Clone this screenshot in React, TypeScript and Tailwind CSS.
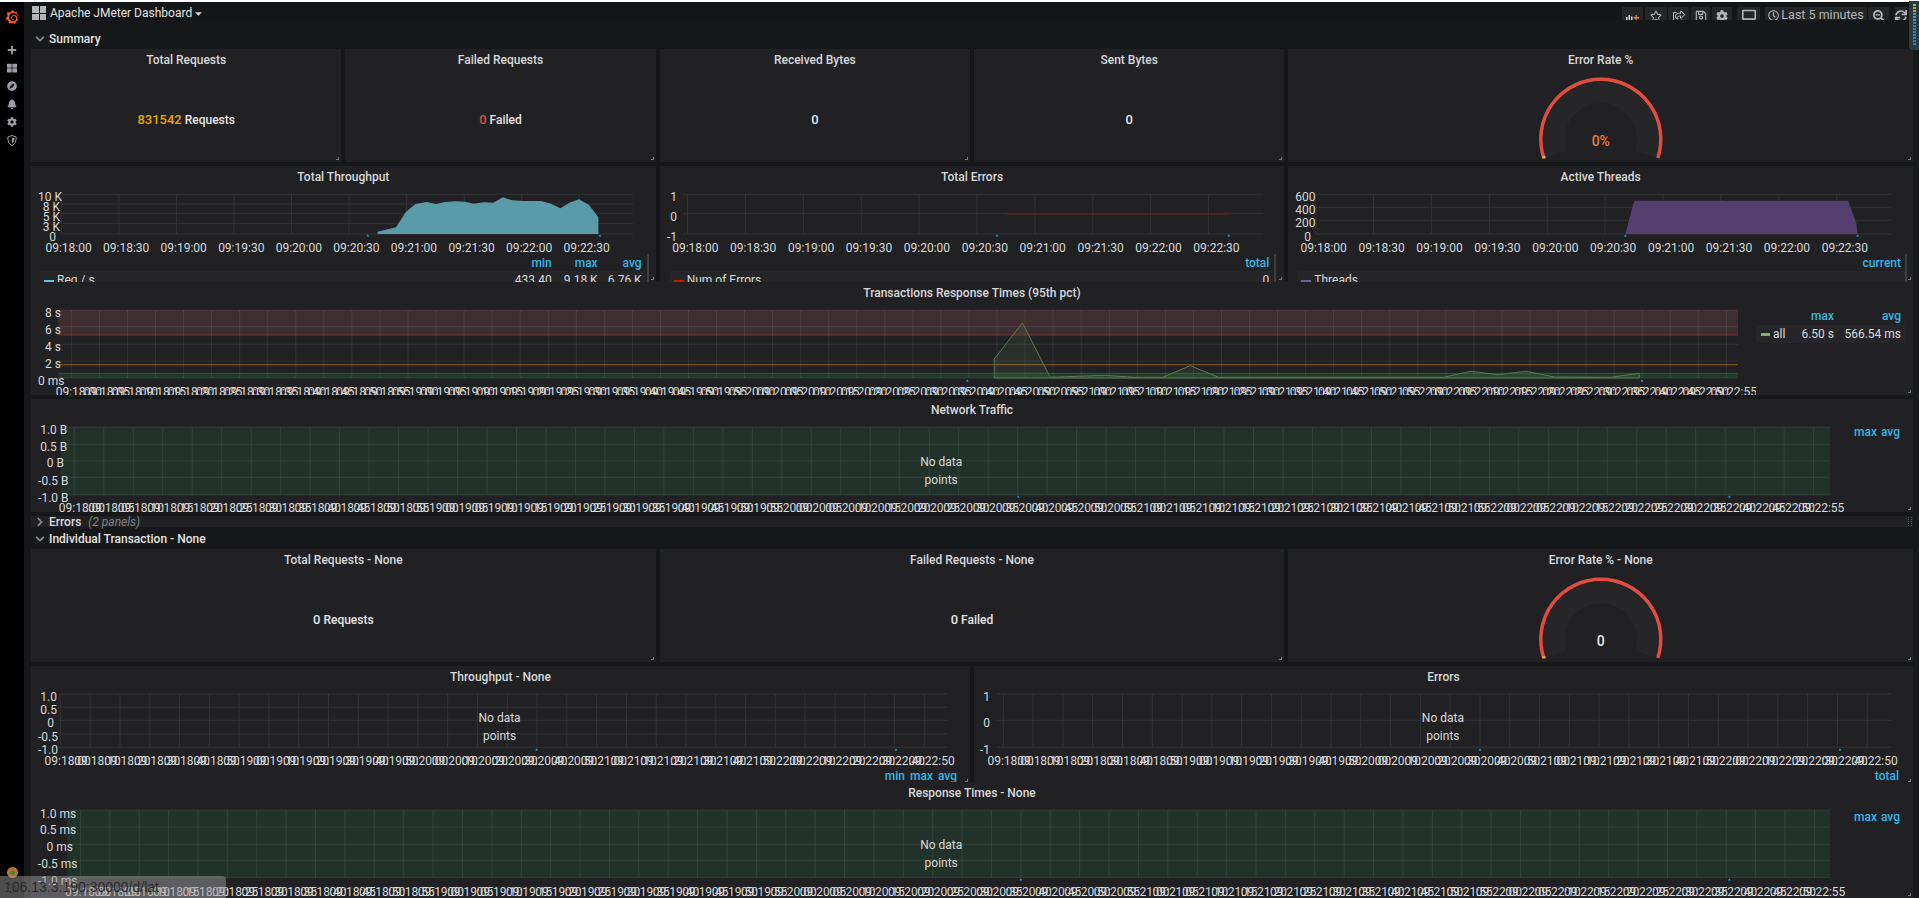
import type { ReactNode } from 'react'
import {
  FaPlus, FaThLarge, FaCompass, FaBell, FaCog, FaRegStar, FaRegShareSquare,
  FaRegSave, FaDesktop, FaRegClock, FaSearchMinus, FaSync, FaCaretDown, FaChevronDown, FaChevronRight,
} from 'react-icons/fa'
import { SiGrafana } from 'react-icons/si'

// hh:mm:ss of the k-th tick, the axis starts at 09:18:00
const tickTime = (k: number, step: number) => {
  const s = 9 * 3600 + 18 * 60 + k * step
  const pad = (v: number) => String(v).padStart(2, '0')
  return `${pad(Math.floor(s / 3600))}:${pad(Math.floor(s / 60) % 60)}:${pad(s % 60)}`
}

type Tick = [string, number, number]

interface ChartProps {
  box: [number, number, number, number] // page coords, so the numbers below read as page pixels
  left: number
  right: number
  lines: number[]
  x0: number
  dx: number
  n: number
  off: number
  step: number
  labelY: number
  ticks: Tick[]
  lineColor?: string
  tris?: [number, number][]
  under?: ReactNode
  children?: ReactNode
}

function Chart({ box, left, right, lines, x0, dx, n, off, step, labelY, ticks, lineColor = '#323336', tris = [], under, children }: ChartProps) {
  const [x, y, w, h] = box
  const idx = Array.from({ length: n }, (_, k) => k)
  return (
    <svg width={w} height={h} viewBox={`${x} ${y} ${w} ${h}`} className="block shrink-0">
      {under}
      {lines.map((ly) => <line key={ly} x1={left} x2={right} y1={ly} y2={ly} stroke={lineColor} />)}
      {idx.map((k) => (
        <line key={k} x1={x0 + k * dx} x2={x0 + k * dx} y1={lines[0]} y2={lines[lines.length - 1]} stroke={lineColor} />
      ))}
      {children}
      {tris.map(([tx, ty]) => <polygon key={tx} points={`${tx - 1.5},${ty + 1.5} ${tx},${ty - 0.5} ${tx + 1.5},${ty + 1.5}`} fill="#1fb2d8" />)}
      {ticks.map(([t, ty, tx]) => (
        <text key={t} x={tx} y={ty + 4} textAnchor="end" className="fill-[#d8d9da] text-xs">{t}</text>
      ))}
      {idx.map((k) => (
        <text key={k} x={x0 + k * dx + off} y={labelY + 4} textAnchor="middle" className="fill-[#d8d9da] text-xs">{tickTime(k, step)}</text>
      ))}
    </svg>
  )
}

function NoData({ x, y }: { x: number; y: number }) {
  return (
    <>
      <text x={x} y={y + 4} textAnchor="middle" className="fill-[#d8d9da] text-xs">No data</text>
      <text x={x} y={y + 22} textAnchor="middle" className="fill-[#d8d9da] text-xs">points</text>
    </>
  )
}

function Panel({ className, title, clip, children }: { className: string; title: string; clip?: boolean; children: ReactNode }) {
  return (
    <div className={`relative flex flex-col bg-[#212124] ${clip ? 'overflow-hidden' : ''} ${className}`}>
      <div className="flex h-[22px] shrink-0 items-center justify-center text-xs font-medium text-[#d8d9da]">{title}</div>
      {children}
      <span className="absolute bottom-[2px] right-[2px] size-[3px] border-b border-r border-[#77787c]" />
    </div>
  )
}

// the value is one step larger than its unit, as in singlestat panels
function Stat({ value, valueClass = '', unit }: { value: string; valueClass?: string; unit?: string }) {
  return (
    <div className="flex flex-1 items-center justify-center pt-[6px] text-xs font-medium text-[#e6e6e6]">
      <span className={`text-[13px] ${valueClass}`}>{value}</span>
      {unit && <span className="ml-[3px]">{unit}</span>}
    </div>
  )
}

function Gauge({ cy, value, colorClass, top }: { cy: number; value: string; colorClass: string; top: number }) {
  const cx = 1600.8
  return (
    <svg width={625} height={91} viewBox={`1288 ${top} 625 91`} className="block shrink-0">
      <path
        d={`M${cx - 55.2} ${cy + 17.9} A58 58 0 1 1 ${cx + 55.2} ${cy + 17.9} L${cx + 34.2} ${cy + 11.1} A36 36 0 1 0 ${cx - 34.2} ${cy + 11.1} Z`}
        fill="#262628"
      />
      <path d={`M${cx - 57} ${cy + 18.5} A60 60 0 1 1 ${cx + 57} ${cy + 18.5}`} fill="none" stroke="#e24d42" strokeWidth={3.5} />
      <rect x={cx - 58.4} y={cy + 16.6} width={3} height={2.4} fill="#eab839" />
      <text x={cx} y={cy + 6.5} textAnchor="middle" className={`text-sm font-medium ${colorClass}`}>{value}</text>
    </svg>
  )
}

function Legend({ cols, name, color, pl, pr, barClass }: {
  cols: [string, string, string][]
  name: string
  color: string
  pl: string
  pr: string
  barClass: string
}) {
  return (
    <div className={`flex-1 text-xs ${pl} ${pr}`}>
      <div className="flex h-[17px] items-center justify-end pr-[4px] font-medium text-[#33b5e5]">
        {cols.map(([h, , w]) => <span key={h} className={`${w} text-right`}>{h}</span>)}
      </div>
      <div className="flex h-[18px] items-center bg-[#262628] pl-[4px] pr-[4px] text-[#d8d9da]">
        <span className={`mr-[3px] mt-[2px] h-[3px] w-[10px] ${color}`} />
        <span className="flex-1">{name}</span>
        {cols.map(([h, v, w]) => <span key={h} className={`${w} text-right`}>{v}</span>)}
      </div>
      <span className={`absolute bottom-0 top-[88px] w-[2px] bg-[#3d3f45] ${barClass}`} />
    </div>
  )
}

function Blue({ children, className = '' }: { children: ReactNode; className?: string }) {
  return <span className={`text-right text-xs font-medium text-[#33b5e5] ${className}`}>{children}</span>
}

function NavButton({ className, children }: { className: string; children: ReactNode }) {
  return <div className={`flex h-[20px] items-center justify-center bg-[#242527] pb-[3px] text-[#b4b5b8] ${className}`}>{children}</div>
}

const ROW = 'grid grid-cols-[repeat(24,minmax(0,1fr))] gap-x-1'

export default function App() {
  return (
    <div className="relative flex h-screen w-screen flex-col overflow-hidden bg-[#161719] font-[Roboto,sans-serif] text-[#d8d9da]">
      <div className="h-[2px] shrink-0 bg-white" />

      <div className="flex min-h-0 flex-1">
        {/* side menu */}
        <aside className="flex w-6 shrink-0 flex-col items-center bg-black pt-[8px] text-[#9b9ea3]">
          <SiGrafana size={14} className="text-[#f05a28]" />
          <div className="mt-[21px] flex flex-col items-center gap-[8px]">
            <FaPlus size={10} />
            <FaThLarge size={10} />
            <FaCompass size={10} />
            <FaBell size={10} />
            <FaCog size={10} />
            <svg width="10" height="11" viewBox="0 0 10 11">
              <path d="M5 .5 9.200 2c0 4-1 7-4.200 8.500C1.800 9 .8 6 .8 2z" fill="none" stroke="currentColor" />
              <path d="M5 2.500 7.400 3.300C7.400 5.500 6.800 7.400 5 8.500z" fill="currentColor" />
            </svg>
          </div>
          <div className="mb-[20px] mt-auto flex size-[11px] items-center justify-center rounded-full bg-[#b9762b]">
            <span className="size-[5px] rounded-full bg-[#5d7a3a]" />
          </div>
        </aside>

        <main className="min-w-0 flex-1 pl-[7px] pr-[6px]">
          {/* top nav, buttons are cut off by the page below */}
          <div className="flex h-[18px] items-start justify-between overflow-hidden bg-[#141517] pt-[4px]">
            <div className="flex h-[14px] items-center">
              <div className="ml-px grid size-[14px] grid-cols-2 gap-px">
                <span className="bg-[#b4b5b8]" />
                <span className="bg-[#b4b5b8]" />
                <span className="bg-[#b4b5b8]" />
                <span className="bg-[#b4b5b8]" />
              </div>
              <span className="ml-[4px] text-xs text-[#e3e3e3]">Apache JMeter Dashboard</span>
              <FaCaretDown size={11} className="ml-[1px] text-[#d8d9da]" />
            </div>
            <div className="mt-px flex items-start pr-[6px]">
              <NavButton className="w-[21px]">
                <svg width="13" height="7" viewBox="0 0 13 7" className="mt-[3px]">
                  <path d="M0 3h1.500v4H0zM2.500 1H4v6H2.500zM5 2.500h1.500V7H5z" fill="#d8d9da" />
                  <path d="M9.500 1H11v2h2v1.500h-2v2H9.500v-2h-2V3h2z" fill="#eb7b18" />
                </svg>
              </NavButton>
              <NavButton className="ml-[2px] w-[22px]"><FaRegStar size={12} /></NavButton>
              <NavButton className="ml-px w-[21px]"><FaRegShareSquare size={12} /></NavButton>
              <NavButton className="ml-[2px] w-[19px]"><FaRegSave size={12} /></NavButton>
              <NavButton className="ml-[2px] w-[20px]"><FaCog size={12} /></NavButton>
              <NavButton className="ml-[5px] w-[23px]"><FaDesktop size={14} /></NavButton>
              <NavButton className="ml-[5px] w-[102px] gap-[2px] text-[12.5px]"><FaRegClock size={11} />Last 5 minutes</NavButton>
              <NavButton className="ml-px w-[21px]"><FaSearchMinus size={12} /></NavButton>
              <NavButton className="ml-[6px] w-[12px]"><FaSync size={12} /></NavButton>
            </div>
          </div>

          <div className="flex h-[29px] items-center gap-[4px] pl-[4px] pt-[9px] text-xs font-medium text-[#e3e3e3]">
            <FaChevronDown size={10} className="text-[#8e9094]" />
            <span>Summary</span>
          </div>

          {/* row 1 */}
          <div className={`${ROW} mb-1 h-[113px]`}>
            <Panel className="col-span-4" title="Total Requests">
              <Stat value="831542" valueClass="text-[#e5a50f]" unit="Requests" />
            </Panel>
            <Panel className="col-span-4" title="Failed Requests">
              <Stat value="0" valueClass="text-[#e24d42]" unit="Failed" />
            </Panel>
            <Panel className="col-span-4" title="Received Bytes"><Stat value="0" /></Panel>
            <Panel className="col-span-4" title="Sent Bytes"><Stat value="0" /></Panel>
            <Panel className="col-span-8" title="Error Rate %">
              <Gauge cy={139.5} top={71} value="0%" colorClass="fill-[#ec7a2c]" />
            </Panel>
          </div>

          {/* row 2 */}
          <div className={`${ROW} h-[116px]`}>
            <Panel className="col-span-8" title="Total Throughput" clip>
              <Chart
                box={[31, 188, 624, 66]} left={62} right={633} lines={[194.3, 204, 213.7, 223.7, 234]}
                x0={61.3} dx={57.56} n={10} off={7.3} step={30} labelY={248}
                ticks={[['10 K', 197, 62], ['8 K', 207, 60], ['5 K', 217, 60], ['3 K', 227, 60], ['0', 237, 56]]}
                tris={[[367.8, 235], [600, 235]]}
              >
                <polygon
                  fill="#5a9ba9"
                  points="377.6,234 377.6,231.7 396,227.3 406,211.7 415.5,204 426.5,202 436,204 445,202 455,201.3 465,201.7 473.5,203.7 483.7,202.3 493,202.7 503,197.3 512,200.3 522.5,201 541,201 551,203.7 560.4,208.3 569.4,202.7 579,199.3 589,205 598.4,217.3 598.4,234"
                />
              </Chart>
              <Legend
                pl="pl-[9px]" pr="pr-[10px]" barClass="right-[7px]" name="Req / s" color="bg-[#5ac8d8]"
                cols={[['min', '433.40', 'w-[46px]'], ['max', '9.18 K', 'w-[46px]'], ['avg', '6.76 K', 'w-[44px]']]}
              />
            </Panel>
            <Panel className="col-span-8" title="Total Errors" clip>
              <Chart
                box={[659, 188, 624, 66]} left={682} right={1262} lines={[194.3, 213.7, 234]}
                x0={686.5} dx={57.9} n={10} off={7.8} step={30} labelY={248}
                ticks={[['1', 197, 676], ['0', 217, 676], ['-1', 237, 676]]}
                tris={[[996, 235], [1227.8, 235]]}
              >
                <line x1={1004.5} x2={1227.8} y1={214} y2={214} stroke="#6b1f1d" />
              </Chart>
              <Legend
                pl="pl-[10px]" pr="pr-[11px]" barClass="right-[8px]" name="Num of Errors" color="bg-[#bf1b00]"
                cols={[['total', '0', 'w-[60px]']]}
              />
            </Panel>
            <Panel className="col-span-8" title="Active Threads" clip>
              <Chart
                box={[1288, 188, 624, 66]} left={1315.5} right={1891.4} lines={[194.3, 207.3, 220.3, 234]}
                x0={1315.6} dx={57.9} n={10} off={8.1} step={30} labelY={248}
                ticks={[['600', 197, 1315.5], ['400', 210, 1315.5], ['200', 223, 1315.5], ['0', 237, 1311]]}
                tris={[[1625.3, 235], [1857.6, 235]]}
              >
                <polygon fill="#53406f" points="1625.3,234 1634.3,200.7 1848.2,200.7 1856.3,223.3 1857.6,234" />
              </Chart>
              <Legend
                pl="pl-[9px]" pr="pr-[8px]" barClass="right-[6px]" name="Threads" color="bg-[#705da0]"
                cols={[['current', '', 'w-[60px]']]}
              />
            </Panel>
          </div>

          {/* Transactions */}
          <div className={`${ROW} mb-1 h-[113px]`}>
            <Panel className="col-span-24" title="Transactions Response Times (95th pct)">
              <div className="flex">
                <Chart
                  box={[31, 304, 1725, 91]} left={58.4} right={1738} lines={[310, 326.7, 344.3, 361, 378]}
                  x0={71.4} dx={28.05} n={60} off={7.4} step={5} labelY={391.7}
                  ticks={[['8 s', 313.3, 61], ['6 s', 330, 61], ['4 s', 347, 61], ['2 s', 364, 61], ['0 ms', 380.7, 64.5]]}
                  tris={[[967.3, 380], [1642, 380]]}
                  lineColor="#ffffff14"
                  under={
                    <>
                      <rect x={58.4} y={310} width={1679.6} height={25.3} fill="#3e2d31" />
                      <rect x={58.4} y={373.3} width={1679.6} height={4.7} fill="#1f3a2a" />
                      <line x1={58.4} x2={1738} y1={335} y2={335} stroke="#7a2b2b" />
                      <line x1={58.4} x2={1738} y1={364.7} y2={364.7} stroke="#8a5b22" />
                      <line x1={58.4} x2={1738} y1={373.3} y2={373.3} stroke="#2a5a38" />
                    </>
                  }
                >
                  <polygon
                    fill="#7eb26d1a"
                    stroke="#5b7a50"
                    points="994.3,378 994.3,359 1022.4,322.7 1050.2,377.3 1105.3,375.3 1133.9,377.3 1162.4,377.3 1190.2,365.7 1218.8,377.3 1443.3,377.3 1471,371.3 1498.4,374.7 1526,371.3 1554.3,377 1610.6,377.3 1639.2,373.3 1639.2,378"
                  />
                </Chart>
                <div className="min-w-0 flex-1 pr-[8px] pt-[3px] text-xs">
                  <div className="flex h-[18px] items-center justify-end">
                    <Blue className="w-[47px]">max</Blue>
                    <Blue className="w-[71px] pr-[4px]">avg</Blue>
                  </div>
                  <div className="flex h-[18px] items-center justify-end bg-[#262628] pl-[5px]">
                    <span className="mr-[3px] mt-[1px] h-[3px] w-[9px] bg-[#7eb26d]" />
                    <span className="flex-1">all</span>
                    <span className="w-[47px] text-right">6.50 s</span>
                    <span className="w-[71px] pr-[4px] text-right">566.54 ms</span>
                  </div>
                </div>
              </div>
            </Panel>
          </div>

          {/* Network */}
          <div className={`${ROW} mb-1 h-[113px]`}>
            <Panel className="col-span-24" title="Network Traffic">
              <div className="flex">
                <Chart
                  box={[31, 421, 1819, 91]} left={61} right={1830} lines={[427, 444.3, 461, 477.3, 495]}
                  x0={74.3} dx={29.48} n={60} off={7.6} step={5} labelY={508.3}
                  ticks={[['1.0 B', 429.7, 67.3], ['0.5 B', 446.7, 67.3], ['0 B', 463.3, 64], ['-0.5 B', 480.7, 68.5], ['-1.0 B', 497.7, 68.5]]}
                  tris={[[1018.4, 496], [1729.4, 496]]}
                  lineColor="#ffffff14"
                  under={<rect x={61} y={427} width={1769} height={68} fill="#20322a" />}
                >
                  <NoData x={941.2} y={461.7} />
                </Chart>
                <div className="flex flex-1 justify-end pr-[13px] pt-[2px]">
                  <div className="flex h-[18px] items-center gap-[4px]"><Blue>max</Blue><Blue>avg</Blue></div>
                </div>
              </div>
            </Panel>
          </div>

          {/* collapsed / open rows */}
          <div className="flex h-[11px] items-center gap-[4px] bg-[#212124] pl-[4px] text-xs font-medium text-[#d8d9da]">
            <FaChevronRight size={10} className="text-[#8e9094]" />
            <span>Errors</span>
            <span className="ml-[3px] font-normal italic text-[#7f8186]">(2 panels)</span>
            <span className="ml-auto mr-[1px] h-[9px] w-[4px] border-x border-dotted border-[#55575c]" />
          </div>
          <div className="flex h-[22px] items-center gap-[4px] pl-[4px] pt-px text-xs font-medium text-[#e3e3e3]">
            <FaChevronDown size={10} className="text-[#8e9094]" />
            <span>Individual Transaction - None</span>
          </div>

          {/* row 3 */}
          <div className={`${ROW} mb-1 h-[113px]`}>
            <Panel className="col-span-8" title="Total Requests - None"><Stat value="0" unit="Requests" /></Panel>
            <Panel className="col-span-8" title="Failed Requests - None"><Stat value="0" unit="Failed" /></Panel>
            <Panel className="col-span-8" title="Error Rate % - None">
              <Gauge cy={639.5} top={571} value="0" colorClass="fill-[#e6e6e6]" />
            </Panel>
          </div>

          {/* row 4 */}
          <div className={`${ROW} mb-[5px] h-[111px]`}>
            <Panel className="col-span-12" title="Throughput - None">
              <Chart
                box={[31, 688, 938, 80]} left={58.4} right={947} lines={[694, 707.3, 720.3, 734, 747.3]}
                x0={60.4} dx={29.79} n={30} off={7.3} step={10} labelY={760.7}
                ticks={[['1.0', 696.7, 57], ['0.5', 709.7, 57], ['0', 722.7, 54], ['-0.5', 736.7, 58], ['-1.0', 749.7, 58]]}
                tris={[[536.7, 749], [896, 749]]}
              >
                <NoData x={499.6} y={717.7} />
              </Chart>
              <div className="flex h-[16px] items-center justify-end pr-[13px]">
                <Blue>min</Blue><Blue className="ml-[5px]">max</Blue><Blue className="ml-[5px]">avg</Blue>
              </div>
            </Panel>
            <Panel className="col-span-12" title="Errors">
              <Chart
                box={[974, 688, 939, 80]} left={997} right={1891} lines={[694, 720.3, 747.3]}
                x0={1003.3} dx={29.79} n={30} off={7.3} step={10} labelY={760.7}
                ticks={[['1', 696.7, 990], ['0', 722.7, 990], ['-1', 749.7, 990]]}
                tris={[[1480, 749], [1840, 749]]}
              >
                <NoData x={1442.9} y={717.7} />
              </Chart>
              <div className="flex h-[16px] items-center justify-end pr-[14px]"><Blue>total</Blue></div>
            </Panel>
          </div>

          {/* row 5 runs off the page */}
          <div className={`${ROW} h-[116px]`}>
            <Panel className="col-span-24" title="Response Times - None">
              <div className="flex">
                <Chart
                  box={[31, 804, 1819, 94]} left={67.3} right={1830} lines={[810, 827, 844.3, 860.3, 877.7]}
                  x0={80.4} dx={29.39} n={60} off={7.8} step={5} labelY={891.7}
                  ticks={[['1.0 ms', 813.7, 76.3], ['0.5 ms', 830, 76.3], ['0 ms', 846.7, 73], ['-0.5 ms', 863.7, 77.5], ['-1.0 ms', 880.7, 77.5]]}
                  tris={[[1020.8, 879], [1729.4, 879]]}
                  lineColor="#ffffff14"
                  under={<rect x={67.3} y={810} width={1762.7} height={67.7} fill="#20322a" />}
                >
                  <NoData x={941.2} y={844.7} />
                </Chart>
                <div className="flex flex-1 justify-end pr-[13px] pt-[4px]">
                  <div className="flex h-[18px] items-center gap-[4px]"><Blue>max</Blue><Blue>avg</Blue></div>
                </div>
              </div>
            </Panel>
          </div>
        </main>
      </div>

      {/* scrollbar minimap widget */}
      <div className="absolute right-0 top-[1px] flex h-[49px] w-[10px] flex-col items-center gap-px rounded-bl-sm bg-[#2b3a42] py-[3px]">
        {Array.from({ length: 14 }, (_, i) => (
          <span key={i} className={`h-[2px] w-[3px] ${i < 3 ? 'bg-[#b9a83a]' : i < 6 ? 'bg-[#4aa38a]' : 'bg-[#2b86b5]'}`} />
        ))}
      </div>

      {/* browser status bubble */}
      <div className="absolute bottom-0 left-0 flex h-[22px] w-[226px] items-center rounded-tr-sm bg-[#9a9a9a]/50 pl-[4px] font-['Liberation_Sans',sans-serif] text-sm text-[#2b2b2b]">
        <span>106.13.3.190:30000/d/lat</span>
        <span className="absolute left-[7px] top-[8px] size-[9px] rounded-full border border-[#3a3a3a]" />
      </div>
    </div>
  )
}
